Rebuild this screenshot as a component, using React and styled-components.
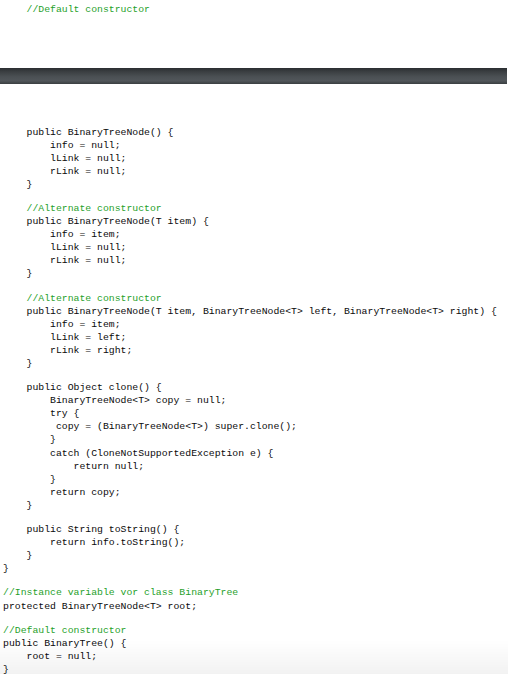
import styled, { createGlobalStyle } from 'styled-components';

const firstPage = [
  { indent: 4, text: '//Default constructor', comment: true },
];

const secondPage = [
  { indent: 4, text: 'public BinaryTreeNode() {' },
  { indent: 8, text: 'info = null;' },
  { indent: 8, text: 'lLink = null;' },
  { indent: 8, text: 'rLink = null;' },
  { indent: 4, text: '}' },
  null,
  { indent: 4, text: '//Alternate constructor', comment: true },
  { indent: 4, text: 'public BinaryTreeNode(T item) {' },
  { indent: 8, text: 'info = item;' },
  { indent: 8, text: 'lLink = null;' },
  { indent: 8, text: 'rLink = null;' },
  { indent: 4, text: '}' },
  null,
  { indent: 4, text: '//Alternate constructor', comment: true },
  { indent: 4, text: 'public BinaryTreeNode(T item, BinaryTreeNode<T> left, BinaryTreeNode<T> right) {' },
  { indent: 8, text: 'info = item;' },
  { indent: 8, text: 'lLink = left;' },
  { indent: 8, text: 'rLink = right;' },
  { indent: 4, text: '}' },
  null,
  { indent: 4, text: 'public Object clone() {' },
  { indent: 8, text: 'BinaryTreeNode<T> copy = null;' },
  { indent: 8, text: 'try {' },
  { indent: 9, text: 'copy = (BinaryTreeNode<T>) super.clone();' },
  { indent: 8, text: '}' },
  { indent: 8, text: 'catch (CloneNotSupportedException e) {' },
  { indent: 12, text: 'return null;' },
  { indent: 8, text: '}' },
  { indent: 8, text: 'return copy;' },
  { indent: 4, text: '}' },
  null,
  { indent: 4, text: 'public String toString() {' },
  { indent: 8, text: 'return info.toString();' },
  { indent: 4, text: '}' },
  { indent: 0, text: '}' },
  null,
  { indent: 0, text: '//Instance variable vor class BinaryTree', comment: true },
  { indent: 0, text: 'protected BinaryTreeNode<T> root;' },
  null,
  { indent: 0, text: '//Default constructor', comment: true },
  { indent: 0, text: 'public BinaryTree() {' },
  { indent: 4, text: 'root = null;' },
  { indent: 0, text: '}' },
];

const Code = ({ lines }) => (
  <>
    {lines.map((line, i) =>
      line ? (
        <Line key={i} $indent={line.indent} $comment={line.comment}>
          {line.text}
        </Line>
      ) : (
        <Blank key={i} />
      )
    )}
  </>
);

const App = () => (
  <Viewer>
    <GlobalStyle />
    <Page $top={3} $height={68}>
      <Code lines={firstPage} />
    </Page>
    <PageGap />
    <Page $top={41.5}>
      <Code lines={secondPage} />
    </Page>
    <BottomShade />
  </Viewer>
);

const GlobalStyle = createGlobalStyle`
  html, body {
    margin: 0;
    padding: 0;
    background: #fff;
    overflow: hidden;
  }
`;

const Viewer = styled.div`
  width: 508px;
  height: 674px;
  overflow: hidden;
  background: #fff;
  font-family: 'Liberation Mono', 'Courier New', monospace;
  font-size: 9.8px;
  color: #000;
`;

const Page = styled.div`
  box-sizing: border-box;
  padding: ${p => p.$top}px 0 0 3px;
  height: ${p => (p.$height ? `${p.$height}px` : 'auto')};
  display: flex;
  flex-direction: column;
`;

const PageGap = styled.div`
  height: 16px;
  margin-right: 1px;
  background: linear-gradient(
    to bottom,
    #2b2e31 0%,
    #3c4043 25%,
    #4b5054 55%,
    #51565a 80%,
    #3a3e41 100%
  );
`;

const Line = styled.div`
  height: 13.1px;
  line-height: 13.1px;
  white-space: pre;
  padding-left: ${p => p.$indent}ch;
  color: ${p => (p.$comment ? '#1f9f2a' : '#0a0a0a')};
`;

const Blank = styled.div`
  height: 11px;
`;

const BottomShade = styled.div`
  position: fixed;
  left: 0;
  right: 0;
  bottom: 0;
  height: 34px;
  pointer-events: none;
  background: linear-gradient(to bottom, rgba(0, 0, 0, 0), rgba(0, 0, 0, 0.05));
`;

export default App;
